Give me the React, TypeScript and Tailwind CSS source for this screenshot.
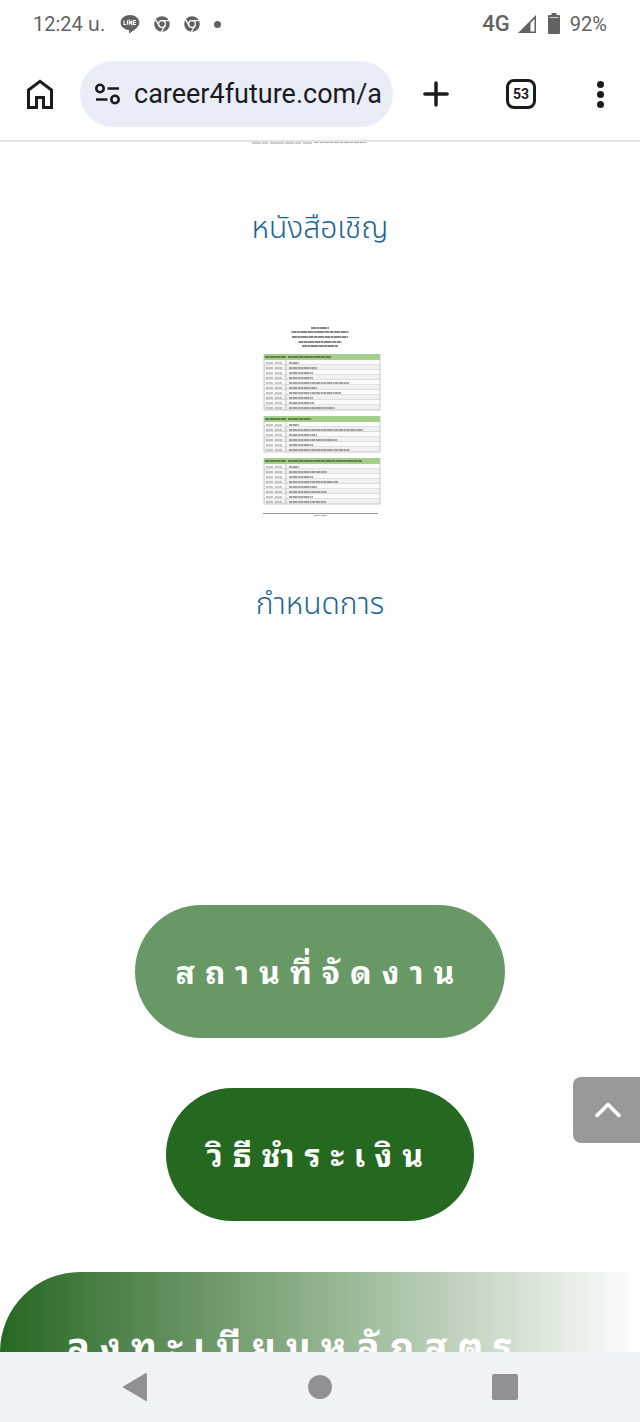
import { ChevronUp, Plus } from "lucide-react";

type ScheduleTable = {
  y: number;
  title: number;
  rows: number[];
};

// Widths of the text lines on the schedule sheet
const SCHEDULE_TABLES: ScheduleTable[] = [
  { y: 29, title: 43, rows: [10, 28, 24, 24, 60, 28, 52, 24, 25, 46] },
  { y: 91, title: 23, rows: [10, 74, 28, 48, 24, 61] },
  { y: 133, title: 74, rows: [10, 38, 24, 49, 28, 38, 24, 37] },
];

const SHEET_HEADING = [
  { y: 2, width: 18 },
  { y: 6, width: 57 },
  { y: 11, width: 56 },
  { y: 16, width: 43 },
  { y: 20, width: 36 },
];

function StatusBar() {
  return (
    <div className="flex h-12 items-center justify-between px-[33px] text-xl text-[#626262]">
      <div className="flex items-center">
        <span className="w-[76px] whitespace-nowrap">12:24 น.</span>
        <svg viewBox="0 0 20 20" className="ml-[11px] h-5 w-5" aria-label="LINE" role="img">
          <path
            d="M10 1C4.800 1 .6 4.400 .6 8.600c0 3.800 3.300 6.900 7.800 7.500.9.200.7.800.6 2.300 0 .7.300.8.900.5 3.300-1.800 9.500-5.600 9.500-10.300C19.400 4.400 15.200 1 10 1Z"
            fill="currentColor"
          />
          <path
            d="M4 6.500v4h2M7.500 6.300v4.400M9.300 10.700V6.500l2.500 4V6.300M16 6.500h-2.500v4H16M13.500 8.500H16"
            fill="none"
            stroke="white"
            strokeWidth="1.100"
          />
        </svg>
        <ChromeIcon />
        <ChromeIcon />
        <span className="ml-3.5 h-[7px] w-[7px] rounded-full bg-current" />
      </div>
      <div className="flex items-center">
        <span className="text-[22px] font-medium">4G</span>
        <svg viewBox="0 0 18 18" className="ml-2 h-[18px] w-[18px]" aria-hidden>
          <path d="M0 18 18 0v18H0Z" fill="currentColor" />
          <path d="M12.500 8 16.500 4v12.500h-4Z" fill="white" />
        </svg>
        <svg viewBox="0 0 12 21" className="ml-3 h-[21px] w-3" aria-hidden>
          <path d="M3.500 0h5v2H11a1 1 0 0 1 1 1v17a1 1 0 0 1-1 1H1a1 1 0 0 1-1-1V3a1 1 0 0 1 1-1h2.500Z" fill="currentColor" />
          <path d="M1.500 4.500h9" stroke="#d0d0d0" />
        </svg>
        <span className="ml-2.5">92%</span>
      </div>
    </div>
  );
}

function ChromeIcon() {
  return (
    <svg viewBox="0 0 16 16" className="ml-3.5 h-4 w-4" aria-hidden>
      <circle cx="8" cy="8" r="7.800" fill="currentColor" />
      <circle cx="8" cy="8" r="3.400" fill="none" stroke="white" strokeWidth="1.300" />
      <path d="M8 4.600h7M5.100 9.700 1.600 3.600M10.900 9.700 7.400 15.800" stroke="white" strokeWidth="1.300" />
    </svg>
  );
}

function BrowserBar() {
  return (
    <div className="flex h-[94px] items-center border-b-2 border-[#e2e2ea] pr-9 pl-[26px] text-[#1b1b1f]">
      <button type="button" aria-label="Home">
        <svg viewBox="0 0 28 30" className="h-[30px] w-7" fill="none" stroke="currentColor" strokeWidth="3" aria-hidden>
          <path d="M2.500 28.500V11L14 2.300 25.500 11v17.500h-8v-10h-7v10Z" />
        </svg>
      </button>
      <div className="ml-[26px] flex h-[66px] min-w-0 flex-1 items-center rounded-full bg-[#e8edf7] pr-2 pl-[15px]">
        <svg viewBox="0 0 25 22" className="h-[22px] w-[25px] shrink-0" fill="none" stroke="currentColor" strokeWidth="2.600" aria-hidden>
          <circle cx="5" cy="5.500" r="3.700" />
          <circle cx="20" cy="16.500" r="3.700" />
          <path d="M12.500 5.500H24M1 16.500h11.500" />
        </svg>
        <input
          type="text"
          aria-label="Address"
          defaultValue="career4future.com/a"
          className="ml-3.5 min-w-0 flex-1 bg-transparent text-[27px] outline-none"
        />
      </div>
      <button type="button" aria-label="New tab" className="ml-6">
        <Plus className="h-[38px] w-[38px]" strokeWidth={2.2} aria-hidden />
      </button>
      <button
        type="button"
        aria-label="53 open tabs"
        className="ml-[51px] flex h-[30px] w-[30px] items-center justify-center rounded-lg border-3 border-current text-sm font-bold"
      >
        53
      </button>
      <button type="button" aria-label="Menu" className="ml-[61px] flex flex-col items-center gap-[3px]">
        <span className="h-[7px] w-[7px] rounded-full bg-current" />
        <span className="h-[7px] w-[7px] rounded-full bg-current" />
        <span className="h-[7px] w-[7px] rounded-full bg-current" />
      </button>
    </div>
  );
}

function ScheduleSheet() {
  return (
    <svg viewBox="0 0 118 192" className="ml-1 h-48 w-[118px]" role="img" aria-label="กำหนดการ">
      {SHEET_HEADING.map((line) => (
        <path
          key={line.y}
          d={`M${57 - line.width / 2} ${line.y + 1}h${line.width}`}
          stroke="#888"
          strokeWidth="2"
          strokeDasharray="5 .5 3 .4 7 .6"
        />
      ))}
      {SCHEDULE_TABLES.map((table) => (
        <g key={table.y}>
          <rect x="1" y={table.y} width="116" height="6" fill="#a5d08c" />
          <path
            d={`M2 ${table.y + 3}h21M25 ${table.y + 3}h${table.title}`}
            stroke="#5f7f50"
            strokeWidth="2"
            strokeDasharray="4 .5 6 .4"
          />
          {table.rows.map((width, i) => {
            const y = table.y + 6 + i * 5;
            return (
              <g key={y}>
                <rect x="1" y={y} width="116" height="5" fill={i % 2 ? "#f1f1f1" : "#fbfbfb"} />
                <path d={`M1 ${y + 5}h116`} stroke="#bbb" strokeWidth=".8" />
                <path d={`M3 ${y + 3}h7M12 ${y + 3}h7`} stroke="#aaa" strokeWidth="1.500" strokeDasharray="2 .4" />
                <path
                  d={`M26 ${y + 3}h${width}`}
                  stroke="#858585"
                  strokeWidth="1.600"
                  strokeDasharray="3 .5 5 .6 2 .4"
                />
              </g>
            );
          })}
          <path
            d={`M1 ${table.y}v${6 + table.rows.length * 5}M23 ${table.y + 6}v${table.rows.length * 5}M117 ${table.y}v${6 + table.rows.length * 5}`}
            stroke="#bbb"
            strokeWidth=".8"
          />
        </g>
      ))}
      <path d="M0 188.500h115" stroke="#999" />
      <path d="M51 190.500h13" stroke="#aaa" strokeDasharray="4 .5 2 .5" />
    </svg>
  );
}

function SystemNav() {
  return (
    <nav className="z-10 flex h-[70px] shrink-0 items-center justify-between bg-[#eff3f8] px-[122px] text-[#8f9194]">
      <button type="button" aria-label="Back">
        <svg viewBox="0 0 26 28" className="h-7 w-[26px]" aria-hidden>
          <path d="M24 1v26L2 14Z" fill="currentColor" stroke="currentColor" strokeWidth="2" strokeLinejoin="round" />
        </svg>
      </button>
      <button type="button" aria-label="Home screen" className="h-6 w-6 rounded-full bg-current" />
      <button type="button" aria-label="Recent apps" className="h-[26px] w-[26px] rounded-xs bg-current" />
    </nav>
  );
}

export default function App() {
  return (
    <div className="flex h-screen flex-col overflow-hidden bg-white font-[Roboto,'Noto_Sans_Thai','Noto_Sans',sans-serif]">
      <header className="shrink-0">
        <StatusBar />
        <BrowserBar />
      </header>

      <main className="relative flex min-h-0 flex-1 flex-col items-center overflow-hidden font-['Noto_Sans_Thai','Noto_Sans',sans-serif]">
        <svg viewBox="0 0 114 3" className="mr-[22px] h-[3px] w-[114px] shrink-0" aria-hidden>
          <path d="M0 1h60" stroke="#ccc" strokeWidth="2" strokeDasharray="9 1 6 2 14 1" />
          <path d="M62 .5h52" stroke="#aaa" strokeDasharray="5 1 3 1" />
        </svg>
        <a href="#invitation" className="mt-[60px] text-[30px] leading-[48px] font-light text-[#1b6592]">
          หนังสือเชิญ
        </a>
        <a href="#schedule" className="mt-[72px] flex flex-col items-center text-[30px] leading-[48px] font-light text-[#1b6592]">
          <ScheduleSheet />
          <span className="mt-16">กำหนดการ</span>
        </a>

        <a
          href="#venue"
          className="mt-[276px] flex h-[133px] shrink-0 items-center rounded-full bg-[#699867] px-[41px] pb-1 font-['Noto_Sans_Thai_Looped','Loma','Noto_Sans_Thai',sans-serif] text-[32px] font-bold tracking-[10px] text-white"
        >
          สถานที่จัดงาน
        </a>
        <a
          href="#payment"
          className="mt-[50px] flex h-[133px] shrink-0 items-center rounded-full bg-[#256820] px-[41px] pb-1 font-['Noto_Sans_Thai_Looped','Loma','Noto_Sans_Thai',sans-serif] text-[32px] font-bold tracking-[10px] text-white"
        >
          วิธีชำระเงิน
        </a>
        <h2 className="mt-[51px] h-40 w-full shrink-0 rounded-tl-[80px] bg-linear-to-r from-[#256820] to-white px-[67px] pt-12 font-['Noto_Sans_Thai_Looped','Loma','Noto_Sans_Thai',sans-serif] text-[38px] leading-[48px] font-bold tracking-[10px] whitespace-nowrap text-white">
          ลงทะเบียนหลักสูตร
        </h2>

        <button
          type="button"
          aria-label="Back to top"
          className="absolute right-0 bottom-[209px] flex h-[66px] w-[67px] items-center justify-center rounded-l-lg bg-[#999] text-white"
        >
          <ChevronUp className="ml-0.5 h-11 w-11" strokeWidth={2} aria-hidden />
        </button>
      </main>

      <SystemNav />
    </div>
  );
}
